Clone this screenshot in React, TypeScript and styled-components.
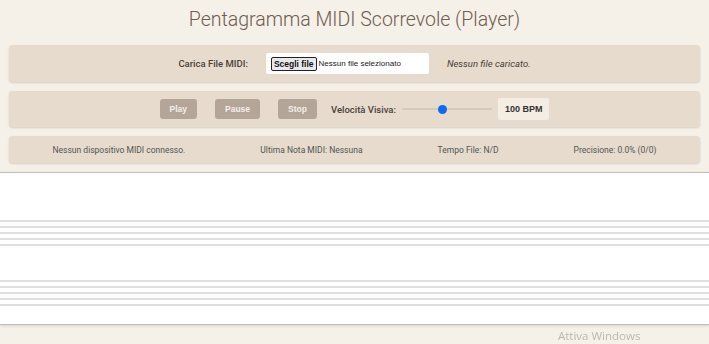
import React from "react";
import styled, { createGlobalStyle } from "styled-components";

const GlobalStyle = createGlobalStyle`
  html, body {
    margin: 0;
    padding: 0;
    background: #f5f0e8;
  }
  body {
    font-family: Roboto, "Liberation Sans", sans-serif;
    color: #4a4038;
  }
`;

const STAFF_TOP = [48, 54, 60, 66, 72];
const STAFF_BOTTOM = [108, 114, 120, 126, 132];

export default function App() {
  return (
    <Page>
      <GlobalStyle />
      <Title>Pentagramma MIDI Scorrevole (Player)</Title>

      <Panel $height={37} $gap={18}>
        <FieldLabel>Carica File MIDI:</FieldLabel>
        <FileBox>
          <FileButton>Scegli file</FileButton>
          <FileName>Nessun file selezionato</FileName>
        </FileBox>
        <FileStatus>Nessun file caricato.</FileStatus>
      </Panel>

      <Panel $height={36} $gap={18}>
        <ControlButton>Play</ControlButton>
        <ControlButton>Pause</ControlButton>
        <ControlButton>Stop</ControlButton>
        <SpeedGroup>
          <SpeedLabel>Velocità Visiva:</SpeedLabel>
          <Slider type="range" min={20} max={200} defaultValue={100} readOnly />
          <BpmBox>100 BPM</BpmBox>
        </SpeedGroup>
      </Panel>

      <StatusBar>
        <StatusText>Nessun dispositivo MIDI connesso.</StatusText>
        <StatusText>Ultima Nota MIDI: Nessuna</StatusText>
        <StatusText>Tempo File: N/D</StatusText>
        <StatusText>Precisione: 0.0% (0/0)</StatusText>
      </StatusBar>

      <Score>
        <svg width="100%" height="151" preserveAspectRatio="none">
          {[...STAFF_TOP, ...STAFF_BOTTOM].map((y) => (
            <line key={y} x1="0" x2="100%" y1={y} y2={y} stroke="#d4d4d4" strokeWidth="1.5" />
          ))}
        </svg>
      </Score>

      <Watermark>Attiva Windows</Watermark>
    </Page>
  );
}

const Page = styled.div`
  min-height: 100vh;
  display: flex;
  flex-direction: column;
`;

const Title = styled.h1`
  margin: 0;
  height: 45px;
  padding-top: 8px;
  box-sizing: border-box;
  text-align: center;
  font-size: 19.5px;
  font-weight: 300;
  color: #6e5d50;
`;

const Panel = styled.div<{ $height: number; $gap: number }>`
  height: ${(p) => p.$height}px;
  margin: 0 9px 9px;
  background: #e6dbcc;
  border-radius: 4px;
  box-shadow: 0 1px 2px rgba(90, 70, 50, 0.2);
  display: flex;
  align-items: center;
  justify-content: center;
  gap: ${(p) => p.$gap}px;
`;

const FieldLabel = styled.span`
  font-size: 9.5px;
  font-weight: 500;
  color: #4a4038;
`;

const FileBox = styled.div`
  width: 163px;
  height: 21px;
  background: #ffffff;
  border-radius: 2px;
  display: flex;
  align-items: center;
  padding-left: 5px;
  box-sizing: border-box;
  gap: 2px;
`;

const FileButton = styled.span`
  height: 12px;
  padding: 0 2px;
  border: 1.5px solid #222;
  border-radius: 2px;
  background: #e9e9ed;
  font-family: "Liberation Sans", Arial, sans-serif;
  font-size: 8.5px;
  font-weight: 700;
  line-height: 12px;
  color: #111;
`;

const FileName = styled.span`
  font-family: "Liberation Sans", Arial, sans-serif;
  font-size: 8px;
  color: #222;
`;

const FileStatus = styled.span`
  font-size: 9.5px;
  font-style: italic;
  color: #4a4038;
`;

const ControlButton = styled.button`
  height: 20px;
  padding: 0 10px;
  border: none;
  border-radius: 3px;
  background: #b3a597;
  color: #f4efe9;
  font-family: "Liberation Sans", Arial, sans-serif;
  font-size: 8.5px;
  font-weight: 700;
`;

const SpeedGroup = styled.div`
  display: flex;
  align-items: center;
  gap: 6px;
  margin-left: -4px;
`;

const SpeedLabel = styled.span`
  font-size: 9.5px;
  font-weight: 500;
  color: #4a4038;
`;

const Slider = styled.input`
  appearance: none;
  -webkit-appearance: none;
  width: 90px;
  height: 10px;
  margin: 0;
  background: transparent;

  &::-webkit-slider-runnable-track {
    height: 2px;
    background: #d3c9bd;
    border-radius: 1px;
  }
  &::-webkit-slider-thumb {
    -webkit-appearance: none;
    width: 9px;
    height: 9px;
    margin-top: -3.5px;
    border-radius: 50%;
    background: #0b6cf0;
  }
`;

const BpmBox = styled.span`
  height: 22px;
  padding: 0 7px;
  display: flex;
  align-items: center;
  background: #f3ede4;
  border-radius: 2px;
  font-family: "Liberation Sans", Arial, sans-serif;
  font-size: 9px;
  font-weight: 700;
  color: #333;
`;

const StatusBar = styled.div`
  height: 27px;
  margin: 0 9px 9px;
  padding: 0 6px;
  background: #e6dbcc;
  border-radius: 4px;
  box-shadow: 0 1px 2px rgba(90, 70, 50, 0.2);
  display: flex;
  align-items: center;
  justify-content: space-around;
`;

const StatusText = styled.span`
  font-size: 8.5px;
  color: #555;
`;

const Score = styled.div`
  height: 151px;
  background: #ffffff;
  border-top: 1.5px solid #bdbdbd;
  border-bottom: 1.5px solid #bdbdbd;
  box-shadow: 0 1px 3px rgba(0, 0, 0, 0.12);

  svg {
    display: block;
  }
`;

const Watermark = styled.div`
  position: fixed;
  left: 558px;
  bottom: 1px;
  font-family: "Open Sans", sans-serif;
  font-size: 11.5px;
  color: #bcb7b0;
  line-height: 14px;
`;
